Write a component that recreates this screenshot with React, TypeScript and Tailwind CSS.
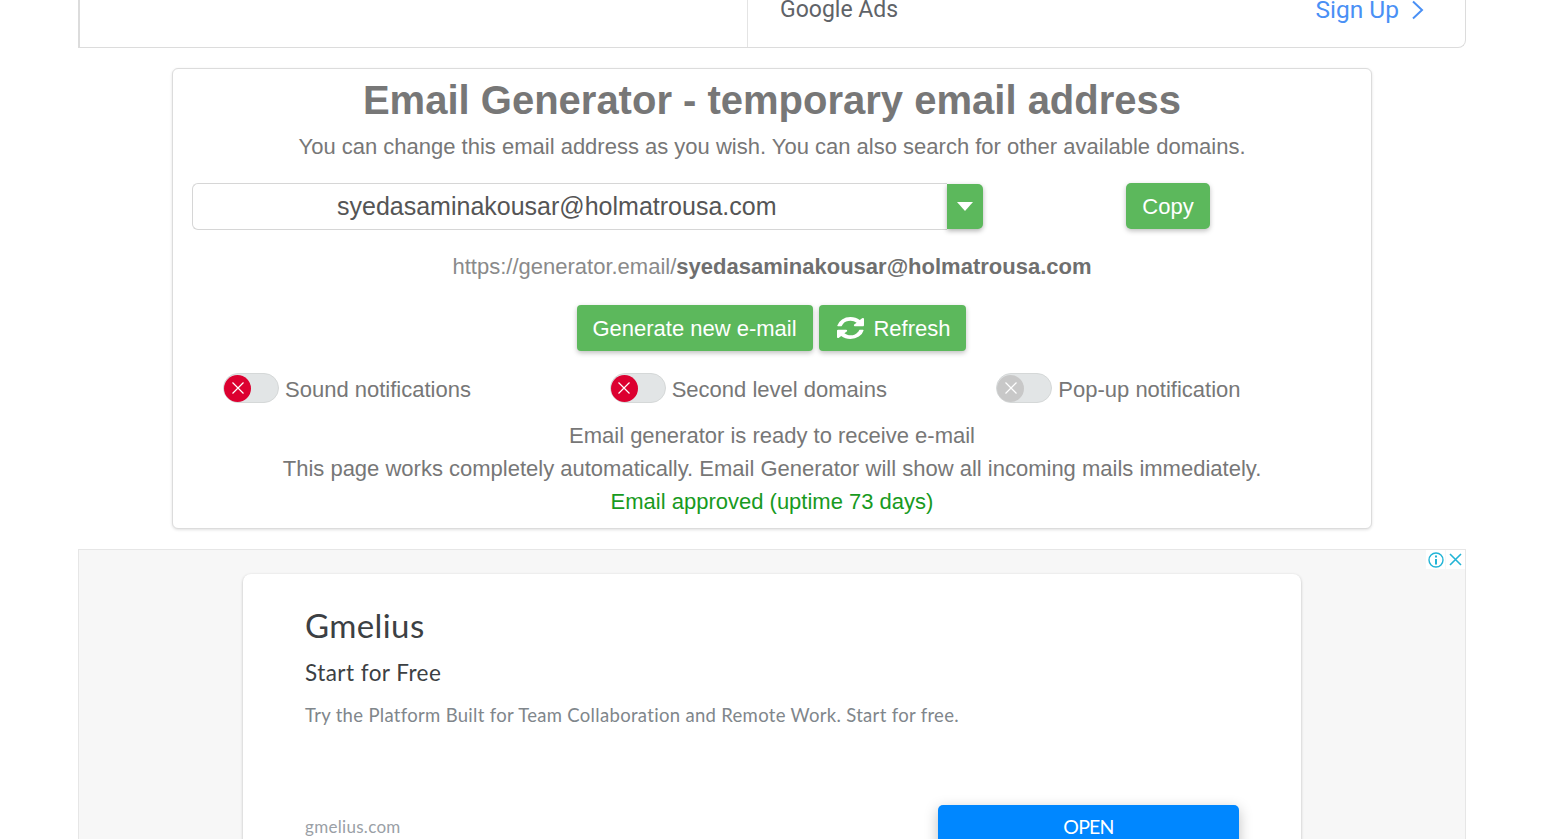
function Toggle({ label, color }: { label: string; color: 'red' | 'gray' }) {
  return (
    <div className="flex items-start pl-[31px]">
      <div className="mt-px flex h-[30px] w-[56px] items-center rounded-full border border-[#d5d8d8] bg-[#e2e5e6]">
        <div className={`flex h-[27px] w-[27px] items-center justify-center rounded-full ${color === 'red' ? 'bg-[#dc0030]' : 'bg-[#c8c8c8]'}`}>
          <svg width="16" height="16" viewBox="0 0 16 16" fill="none" stroke="#ffffff" strokeWidth="1.2">
            <path d="M2.5 2.5 13.5 13.5M13.5 2.5 2.5 13.5" />
          </svg>
        </div>
      </div>
      <span className="ml-[6px] pt-[3px] text-[22px] leading-[30px] text-[#777777]">{label}</span>
    </div>
  );
}

export default function App() {
  return (
    <div className="h-[839px] w-[1544px] overflow-hidden bg-white font-['Liberation_Sans',Arial,sans-serif]">
      {/* top ad, mostly scrolled away */}
      <div className="mx-[78px] -mt-px flex h-[49px] rounded-br-[8px] border border-t-0 border-l-2 border-[#dcdcdc] bg-white">
        <div className="w-[668px] border-r border-[#e4e4e4]"></div>
        <div className="flex flex-1 items-end justify-between pr-[40px] pb-[22px] pl-[32px] font-['Roboto',sans-serif] leading-[30px]">
          <span className="text-[23px] text-[#5f6368]">Google Ads</span>
          <span className="flex items-center gap-[12px] text-[24.5px] text-[#4a90f5]">
            Sign Up
            <svg width="14" height="20" viewBox="0 0 14 20" fill="none" stroke="#4a90f5" strokeWidth="2">
              <path d="M2 1.5 11 10 2 18.5" />
            </svg>
          </span>
        </div>
      </div>

      {/* generator card */}
      <div className="mx-auto mt-[20px] h-[461px] w-[1200px] rounded-[6px] border border-[#dcdcdc] bg-white px-[19px] text-center shadow-[0_1px_3px_rgba(0,0,0,0.12)]">
        <h1 className="pt-[7px] text-[40px] leading-[48px] font-bold text-[#777777]">Email Generator - temporary email address</h1>
        <p className="mt-[7px] text-[22px] leading-[32px] text-[#777777]">
          You can change this email address as you wish. You can also search for other available domains.
        </p>

        <div className="mt-[20px] flex items-start">
          <div className="flex h-[47px] w-[755px] items-center rounded-l-[6px] border border-r-0 border-[#d6d6d6] pl-[144px] text-[25px] text-[#555555]">
            syedasaminakousar@holmatrousa.com
          </div>
          <div className="mt-px flex h-[45px] w-[36px] items-center justify-center rounded-r-[5px] bg-[#5cb85c] shadow-[0_2px_5px_rgba(0,0,0,0.3)]">
            <div className="h-0 w-0 border-x-[8px] border-t-[9px] border-x-transparent border-t-white"></div>
          </div>
          <button className="ml-[143px] h-[46px] w-[84px] rounded-[5px] bg-[#5cb85c] text-[22px] text-white shadow-[0_2px_5px_rgba(0,0,0,0.25)]">Copy</button>
        </div>

        <p className="mt-[21px] text-[22px] leading-[32px] text-[#8a8a8a]">
          https://generator.email/<b className="text-[#6f6f6f]">syedasaminakousar@holmatrousa.com</b>
        </p>

        <div className="mt-[22px] flex justify-center gap-[6px] pr-[2px]">
          <button className="h-[46px] w-[236px] rounded-[4px] bg-[#5cb85c] text-[22px] text-white shadow-[0_2px_5px_rgba(0,0,0,0.25)]">Generate new e-mail</button>
          <button className="flex h-[46px] w-[147px] items-center justify-center gap-[9px] rounded-[4px] bg-[#5cb85c] pl-[4px] text-[22px] text-white shadow-[0_2px_5px_rgba(0,0,0,0.25)]">
            <svg className="h-[22px] w-[27px]" viewBox="128 128 1536 1536" preserveAspectRatio="none" fill="currentColor">
              <path d="M1639 1056q0 5-1 7-64 268-268 434.5t-478 166.5q-146 0-282.5-55t-243.5-157l-129 129q-19 19-45 19t-45-19-19-45v-448q0-26 19-45t45-19h448q26 0 45 19t19 45-19 45l-137 137q71 66 161 102t187 36q134 0 250-65t186-179q11-17 53-117 8-23 30-23h192q13 0 22.5 9.5t9.5 22.5zm25-800v448q0 26-19 45t-45 19h-448q-26 0-45-19t-19-45 19-45l138-138q-148-137-349-137-134 0-250 65t-186 179q-11 17-53 117-8 23-30 23h-199q-13 0-22.5-9.5t-9.5-22.5v-7q65-268 270-434.5t480-166.5q146 0 284 55.5t245 156.5l130-129q19-19 45-19t45 19 19 45z" />
            </svg>
            Refresh
          </button>
        </div>

        <div className="mt-[21px] grid grid-cols-3 text-left">
          <Toggle label="Sound notifications" color="red" />
          <Toggle label="Second level domains" color="red" />
          <Toggle label="Pop-up notification" color="gray" />
        </div>

        <div className="mt-[14px] text-[22px] leading-[33px] text-[#777777]">
          <p>Email generator is ready to receive e-mail</p>
          <p>This page works completely automatically. Email Generator will show all incoming mails immediately.</p>
          <p className="text-[#189a1e]">Email approved (uptime 73 days)</p>
        </div>
      </div>

      {/* bottom ad */}
      <div className="relative mx-[78px] mt-[20px] h-[400px] border border-[#e6e6e6] bg-[#f7f7f7] pt-[24px] pl-[164px]">
        <div className="absolute top-0 right-0 flex gap-[1px]">
          <div className="flex h-[19px] w-[19px] items-center justify-center bg-white">
            <svg width="16" height="16" viewBox="0 0 16 16" fill="none" stroke="#22b4d6" strokeWidth="1.4">
              <circle cx="8" cy="8" r="7" />
              <path d="M8 7v5.5M8 3.5v2" strokeWidth="2" />
            </svg>
          </div>
          <div className="flex h-[19px] w-[19px] items-center justify-center bg-white">
            <svg width="13" height="13" viewBox="0 0 13 13" fill="none" stroke="#22b4d6" strokeWidth="1.6">
              <path d="M1 1 12 12M12 1 1 12" />
            </svg>
          </div>
        </div>

        <div className="h-[400px] w-[1058px] rounded-[8px] bg-white pt-[31px] pl-[62px] font-['Lato',sans-serif] shadow-[0_1px_3px_rgba(0,0,0,0.25)]">
          <div className="text-[33px] leading-[40px] tracking-[0.4px] text-[#3c4043]">Gmelius</div>
          <div className="mt-[12px] text-[22.5px] leading-[32px] tracking-[0.45px] text-[#3c4043]">Start for Free</div>
          <div className="mt-[12px] text-[18.5px] leading-[28px] tracking-[0.31px] text-[#80868b]">Try the Platform Built for Team Collaboration and Remote Work. Start for free.</div>
          <div className="mt-[76px] flex items-start justify-between pr-[62px]">
            <span className="pt-[10px] text-[17px] leading-[24px] tracking-[0.3px] text-[#9aa0a6]">gmelius.com</span>
            <button className="h-[60px] w-[301px] rounded-[5px] bg-[#0087ff] pb-[16px] text-[19.5px] tracking-[-0.8px] text-white shadow-[0_4px_14px_rgba(0,0,0,0.25)]">OPEN</button>
          </div>
        </div>
      </div>
    </div>
  );
}
